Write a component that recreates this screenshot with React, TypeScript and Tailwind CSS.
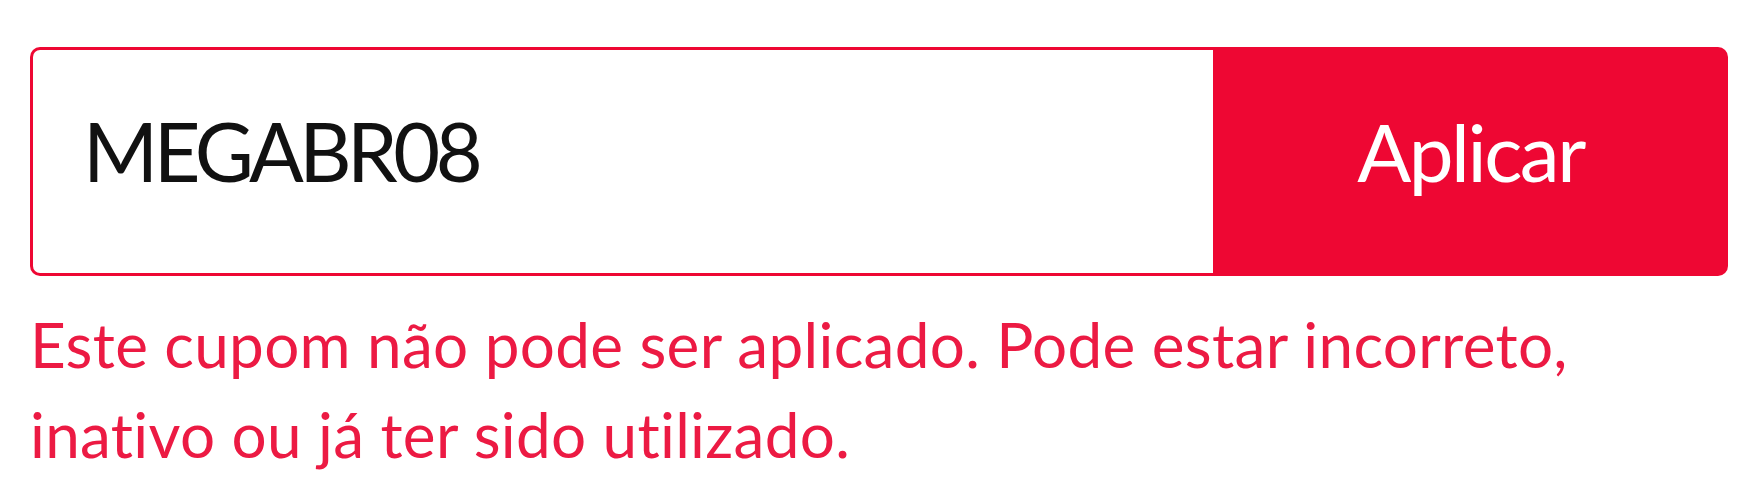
export default function App() {
  return (
    <div className="min-h-[500px] bg-white pl-[30px] pr-[22px] pt-[47px] font-['Lato',sans-serif] [font-variant-ligatures:none]">
      {/* coupon field + apply button */}
      <div className="flex h-[229px] w-[1698px]">
        <div className="flex flex-1 items-center rounded-l-[10px] border-[3px] border-r-0 border-[#ee0733] bg-white pb-[22px] pl-[50px]">
          <span className="text-[81px] leading-none tracking-[-4.5px] text-[#111111]">MEGABR08</span>
        </div>
        <button
          type="button"
          className="flex w-[515px] items-center justify-center rounded-r-[10px] bg-[#ee0733] pb-[22px] text-[80px] leading-none tracking-[-2.5px] text-white"
        >
          Aplicar
        </button>
      </div>
      <p className="mt-[23px] w-[1620px] text-[62px] leading-[90px] tracking-[0.3px] text-[#ec1a43]">
        Este cupom não pode ser aplicado. Pode estar incorreto, inativo ou já ter sido utilizado.
      </p>
    </div>
  );
}
